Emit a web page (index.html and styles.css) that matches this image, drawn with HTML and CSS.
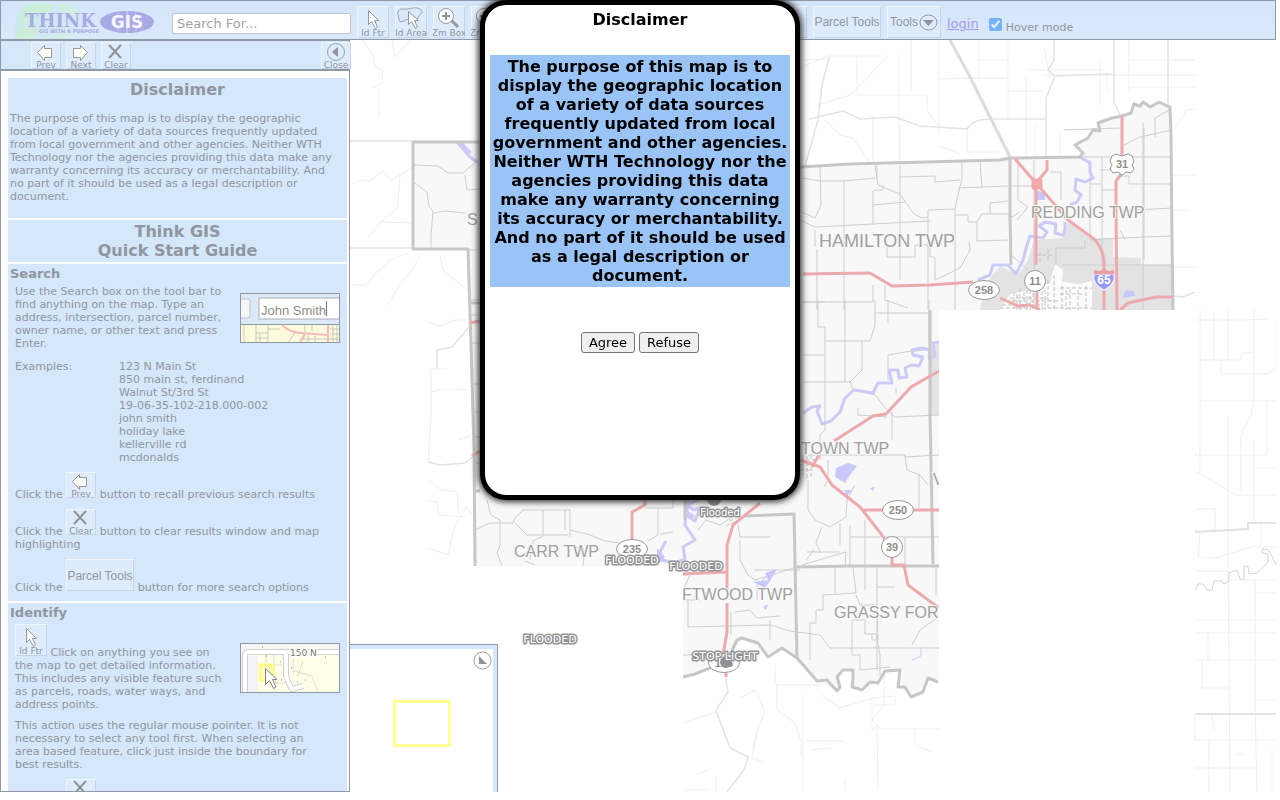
FILE: index.html
```html
<!DOCTYPE html>
<html lang="en">
<head>
<meta charset="utf-8">
<title>Think GIS</title>
<link rel="stylesheet" href="styles.css">
</head>
<body>
<svg class="defs" aria-hidden="true">
  <defs>
    <symbol id="i-prev" viewBox="0 0 30 26"><path d="M6.500 9.500 13.500 2.500V5.500H20.500V14.500H13.500V17.500Z" fill="#fdfdf6" stroke="#96979b"/><text x="15" y="25" class="px">Prev</text></symbol>
    <symbol id="i-next" viewBox="0 0 30 26"><path d="M21.500 9.500 14.500 2.500V5.500H7.500V14.500H14.500V17.500Z" fill="#fdfdf6" stroke="#96979b"/><text x="15" y="25" class="px">Next</text></symbol>
    <symbol id="i-clear" viewBox="0 0 30 26"><path d="M8 2 20 15M20 2 8 15" fill="none" stroke="#8e9299" stroke-width="2"/><text x="15" y="25" class="px">Clear</text></symbol>
    <symbol id="i-close" viewBox="0 0 30 26"><circle cx="15" cy="9" r="8.500" fill="none" stroke="#96a0ae"/><path d="M17 4V14L11 9Z" fill="#8e9299"/><text x="15" y="25" class="px">Close</text></symbol>
    <symbol id="i-ftr" viewBox="0 0 32 32"><path d="M11.500 4.500V18.500L14.500 15.500 18.500 22.500 20.500 21 17.500 14.500H21.500Z" fill="#fdfdfd" stroke="#96979b"/><text x="16" y="30" class="px">Id Ftr</text></symbol>
    <symbol id="i-area" viewBox="0 0 32 32"><path d="M3 6C4 1 9 4 13 3S21 1 25 3 26 8 24 10 22 15 19 15 15 12 11 14 4 17 4 13 2 9 3 6Z" fill="#dce9fa" stroke="#96a0ae"/><path d="M13.500 5.500V18.500L16.500 15.500 20.500 22.500 22.500 21 19.500 14.500H23.500Z" fill="#fdfdfd" stroke="#96979b"/><text x="16" y="30" class="px">Id Area</text></symbol>
    <symbol id="i-zoom" viewBox="0 0 32 32"><path d="M18 14 25 21" stroke="#96979b" stroke-width="3"/><circle cx="13" cy="10" r="7.500" fill="#fff" stroke="#96979b"/><path d="M9 10H17M13 6V14" stroke="#8e9299" stroke-width="2"/><text x="16" y="30" class="px">Zm Box</text></symbol>
    <symbol id="i-parcel" viewBox="0 0 68 32"><text x="34" y="21" class="tool-text">Parcel Tools</text></symbol>
  </defs>
</svg>

<div class="app">
  <header class="topbar">
    <svg class="logo" viewBox="0 0 160 38" width="160" height="38" role="img" aria-label="Think GIS, GIS with a purpose">
      <defs>
        <linearGradient id="sea"><stop offset="0" stop-color="#c8ebe6"/><stop offset="1" stop-color="#d5e7fa" stop-opacity="0"/></linearGradient>
      </defs>
      <path d="M14 38Q12 12 28 2H110V38Z" fill="url(#sea)"/>
      <path d="M21 8Q38-2 53 4Q50 13 38 13Q32 21 23 23Q17 18 21 8ZM18 29Q30 24 38 29L30 38H16Z" fill="#cbedd9"/>
      <path d="M55 3Q75 0 79 12Q73 18 61 13ZM56 32Q68 28 73 34L64 38H54Z" fill="#d2eee4"/>
      <text x="24" y="26" class="logo-word">THINK</text>
      <ellipse cx="126" cy="21" rx="27" ry="11" fill="#a9aae4"/>
      <path d="M126 10V32M118 12Q110 21 118 30M134 12Q142 21 134 30" stroke="#d3d8f6" fill="none"/>
      <text x="126" y="27" class="logo-gis">GIS</text>
      <text x="38" y="32" class="logo-sub">GIS WITH A PURPOSE</text>
    </svg>
    <input class="search" type="text" placeholder="Search For..." aria-label="Search">
    <div class="tools">
      <button class="tool" aria-label="Id Ftr"><svg><use href="#i-ftr"/></svg></button>
      <button class="tool" aria-label="Id Area"><svg><use href="#i-area"/></svg></button>
      <button class="tool" aria-label="Zm Box"><svg><use href="#i-zoom"/></svg></button>
      <button class="tool" aria-label="Zm Box"><svg><use href="#i-zoom"/></svg></button>
      <button class="tool last"></button>
    </div>
    <button class="tool wide">Parcel Tools</button>
    <button class="tool menu">Tools
      <svg width="19" height="17" viewBox="0 0 19 17"><ellipse cx="9.500" cy="8.500" rx="8.500" ry="7.500" fill="none" stroke="#8e97a5"/><path d="M4 6H15L9.500 12Z" fill="#8e9299"/></svg></button>
    <a class="login" href="#login">login</a>
    <label class="hover"><input type="checkbox" checked><span>Hover mode</span></label>
  </header>

  <div class="body">
    <aside class="side">
      <nav class="sidebar-tools">
        <button class="small" aria-label="Prev"><svg><use href="#i-prev"/></svg></button>
        <button class="small" aria-label="Next"><svg><use href="#i-next"/></svg></button>
        <button class="small" aria-label="Clear"><svg><use href="#i-clear"/></svg></button>
        <button class="small close" aria-label="Close"><svg><use href="#i-close"/></svg></button>
      </nav>
      <div class="results">
        <section class="block">
          <h2>Disclaimer</h2>
          <p class="legal">The purpose of this map is to display the geographic location of a variety of data sources frequently updated from local government and other agencies. Neither WTH Technology nor the agencies providing this data make any warranty concerning its accuracy or merchantability. And no part of it should be used as a legal description or document.</p>
        </section>
        <section class="block"><h2>Think GIS<br>Quick Start Guide</h2></section>
        <section class="block">
          <h3>Search</h3>
          <div class="guide">
            <svg class="shot" viewBox="0 0 100 50">
              <rect width="100" height="50" fill="#dce9f9"/>
              <rect x="-5" y="6" width="15" height="19" rx="2" fill="#f5f6f8" stroke="#bcc3ce"/>
              <rect x="19" y="5" width="90" height="21" fill="#fff" stroke="#a9acb3"/>
              <text x="21" y="22" class="shot-text">John Smith</text><path d="M86.500 8V23" stroke="#777"/>
              <rect y="31" width="100" height="19" fill="#fdfadd"/><path d="M0 31.500H100" stroke="#8d99a6"/>
              <path d="M4 32V50M16 32V50M28 32V50M16 40H28M16 45H28M20 41V50M28 36H40M48 50 56 38M65 32V39M72 32V38M60 46H100M68 42V50M75 43V50M93 32V50M97 32V50M90 36H100M90 41H100" stroke="#c9c9ba" fill="none"/>
              <path d="M42 32Q49 39 60 40L88 42M88 32V50M60 50 65 41" stroke="#f6b9bd" stroke-width="2" fill="none"/>
              <rect x=".5" y=".5" width="99" height="49" fill="none" stroke="#8d99a6"/>
            </svg>
            <p>Use the Search box on the tool bar to find anything on the map. Type an address, intersection, parcel number, owner name, or other text and press Enter.</p>
            <dl><dt>Examples:</dt><dd>123 N Main St<br>850 main st, ferdinand<br>Walnut St/3rd St<br>19-06-35-102-218.000-002<br>john smith<br>holiday lake<br>kellerville rd<br>mcdonalds</dd></dl>
            <p>Click the <svg class="pic"><use href="#i-prev"/></svg> button to recall previous search results</p>
            <p>Click the <svg class="pic"><use href="#i-clear"/></svg> button to clear results window and map highlighting</p>
            <p>Click the <svg class="pic parcel"><use href="#i-parcel"/></svg> button for more search options</p>
          </div>
        </section>
        <section class="block">
          <h3>Identify</h3>
          <div class="guide">
            <svg class="shot second" viewBox="0 0 100 50">
              <rect width="100" height="50" fill="#fffee8"/><path d="M0 0H100V10H8V50H0Z" fill="#f5f5f3"/><path d="M8 13H18V50H8Z" fill="#f3f3f5"/>
              <path d="M5 50V12Q5 9 10 9H100M46 10V32Q49 42 52 46L63 43" fill="none" stroke="#cfcfcf" stroke-width="6"/>
              <path d="M5 50V12Q5 9 10 9H100M46 10V32Q49 42 52 46L63 43" fill="none" stroke="#fff" stroke-width="4"/>
              <path d="M26 12V20M34 12V30M53 13V32M42 22H20M54 28 72 33 78 50M63 18 58 33M30 40H46M35 32V49" fill="none" stroke="#deded5"/>
              <rect x="20" y="22" width="13" height="15" fill="#fffec0" stroke="#fffb8c" stroke-width="3"/>
              <path d="M22 4h1M26 13h1M40 19h1M50 14h1M51 25h1M41 37h1M57 39h1M65 37h1M85 14h1" stroke="#888"/>
              <text x="50" y="13" class="road">150 N</text>
              <path d="M25.500 25.500V41.500L29.500 37.500 33.500 45.500 36 44 32.500 36.500H37Z" fill="#fff" stroke="#888"/>
              <rect x=".5" y=".5" width="99" height="49" fill="none" stroke="#8d99a6"/>
            </svg>
            <p><svg class="pic ftr"><use href="#i-ftr"/></svg> Click on anything you see on the map to get detailed information. This includes any visible feature such as parcels, roads, water ways, and address points.</p>
            <p class="narrow">This action uses the regular mouse pointer. It is not necessary to select any tool first. When selecting an area based feature, click just inside the boundary for best results.</p>
            <p>Click the <svg class="pic"><use href="#i-clear"/></svg></p>
          </div>
        </section>
      </div>
    </aside>

    <main class="map">
      <svg class="canvas" role="img" aria-label="County map">
        <defs>
          <clipPath id="tiles"><path d="M350 40H1195V310H939V792H683V566H350Z"/></clipPath>
        </defs>
        <g transform="translate(-350 -40)">
          <g clip-path="url(#tiles)">
            <g class="faint">
              <path d="M363 40 373 56 375 66 383 71 382 83 373 88M379 90V117M392 40 395 57 403 48 410 40M352 184 362 180 370 181 383 171 391 180 400 175 413 167M400 175 398 207 378 225 368 238M380 222 412 223M350 285 366 285 376 273 390 260 408 253M420 255 413 269 398 287 388 305M440 255 443 270 455 280 467 290M427 322 440 326 455 320 472 320M428 369H448M431 371V420L428 460M430 392 445 389 468 390M458 440 470 436M428 480 440 489 457 492 459 515M428 500 438 503V515L465 517M428 548 448 555 454 528 466 507 472 515"/>
              <path d="M790 72 828 56H880M804 60 826 59M818 105 850 95 869 76 888 55M857 57V95H927V110L939 127M899 55V160M911 40V92M939 40V135M962 78H1008M979 40V80M1008 40V120M1026 70H1100M825 120 840 135 853 138 870 163M873 116V165M900 125V160M967 128V152H1000M939 146 960 154M1026 77V160M1008 91H1044M1045 75H1195M1128 60H1195M1128 87H1195M1129 40V90M1044 48 1050 78M1107 75V90M1172 60H1195M1174 130 1187 110 1195 109M1173 175H1195M1173 210H1190M1173 267H1195M1035 126V154M1060 130V157M1100 62V105M977 60H1010M937 79 1005 78"/>
              <path d="M775 665V685L820 685M777 684V710L795 723 801 741V757M683 723 717 712M740 698 755 690 765 712 758 728 752 758 763 762M822 695 839 708 873 698 895 696V705H873M872 700V730L877 725 878 790M884 672V705L872 720 880 728M845 780V792M803 695V792M805 741H845M811 750 832 748M685 790H710M880 729H939M915 730V745L932 752M697 775 708 770M716 777V792M752 750 758 728"/>
            </g>
            <g class="soft">
              <path d="M350 141H413M350 248H413M804 170 818 120 822 85 829 57M809 119 843 111 860 119 895 117 920 126 967 129Q973 119 990 119H1045M1054 40V60L1048 70 1055 76 1046 98V158M1055 76 1112 74M1114 40V102L1120 115M1168 40V107M428 462 440 465 465 463 475 455M437 369V350L452 347 470 326M725 672 728 692 716 710 730 748 748 757 744 770 727 792"/>
              <path class="thick" d="M950 40 970 77 990 117 1010 157"/>
              <path d="M1173 296 1183 297 1195 292"/>
            </g>
            <path class="land" d="M413 142H480L800 166 1010 159 1080 157 1083 153 1075 145 1088 138 1093 130 1100 131 1098 123 1112 118 1122 116 1131 113 1134 104 1143 102 1150 107 1159 102 1170 107 1173 310H939V682L928 678 923 692 911 697 898 687 900 670 885 671 878 683 862 690 852 687 853 670 843 670 837 691 817 681 797 658 782 648 768 657 742 638 730 655 683 677V566H476L468 249H413Z"/>
            <path class="city" d="M980 310 985 285 1000 266 1018 275 1028 260 1034 240 1062 238 1068 222 1080 231 1090 238H1113V257L1141 258V265L1172 265V310ZM929 350 939 342V415H929Z"/>
            <path class="open" d="M1000 310 1010 294 1030 290 1050 283 1055 264 1063 270 1062 282 1080 284 1092 281 1092 310Z"/>
            <g class="local">
              <path d="M413 165 438 166 448 173 463 173 477 161 485 174M465 175 467 190 480 189M415 183 427 192 429 206 433 212 431 235V249M433 213 445 211 465 213M468 250H480M471 300H480M471 315H480M471 343H480M471 384H480M474 412H480M474 437H480M474 463H480M475 530 490 523 513 523 515 518 523 510H570V537M565 510V530M543 510V536L533 541 530 560M515 523 527 535H568M487 500 491 515 500 520 500 545 497 553 502 566M570 530 590 535 605 541 620 543M570 545 585 550 583 566M525 561 535 565M645 508H673V500M658 508V535L648 541M660 534 673 532"/>
              <path d="M802 178 820 181 843 181 877 178V163M820 167 821 205 815 218 802 212M800 220 815 227 930 221M844 181V310M817 249V310M815 230V247M875 165 878 185 900 194 914 214 922 218 928 217V210L955 209M900 165V280M900 177 935 176V182L960 180M962 160V178L955 208V310M980 161 982 188M958 188 1008 186M872 192 875 190H883V185M873 191V225M873 205 905 202M955 215H968V222H977L982 214H1008M990 203V214M990 203 1008 201M977 222V241L1008 240M887 247V257H915V245M915 245H930V257H935L935 280 960 268 970 250 969 242M802 302H873V285M885 285V300L908 308M928 217V310"/>
              <path d="M1010 186H1034M1034 160V305M1050 172H1061V200M1018 158V200L1028 207 1017 220M1010 218 1020 212M1028 270 1010 254M1122 146 1140 137 1172 130M1143 123V310M1064 130 1120 128M1083 157H1172M1102 157V265M1100 170H1120M1120 176H1129V184H1172M1090 184H1102M1102 190H1118M1090 160V240M1120 211 1172 208M1120 238 1172 236M1120 230 1125 240M1144 128V260M1155 137V118L1169 110M1090 240 1120 238M1056 248H1085V240M1056 248V265M1063 265H1172"/>
              <path d="M803 302H825M818 300V327H825V341H870L875 325V300M845 300V382M825 341V430L820 435V460M802 355H825M862 341V370L850 382 802 382M875 313H929M888 300V323M888 355 905 352 925 350M888 355V380M929 340V300M850 382 853 390M853 390 875 395 887 410 895 417 939 415M858 408V415L887 417M892 412V440M896 388V393M808 455H905V457L939 455M905 455 907 470 920 475 928 485M919 475V508M828 460V480L824 487M808 480V510L815 520 830 527 846 517 847 500 855 485M865 520V590M807 552H840M822 527 816 543 821 553M850 525V565M850 537H939M802 565 846 552 845 565M905 537V565M740 537 738 525M740 537H770M740 540V560L748 575 755 580 797 567M683 590 690 575M754 570 800 570M735 612 750 610 757 618 780 616M684 600H700M688 600V627L770 625M770 620V640M683 655H720M770 625 790 631 820 635 830 648H939M810 660V623H816V610H823V595L856 593 853 567M835 567V593M856 595 860 605H877L878 640H872V633M852 620V655H860V670L890 667M852 620H865V634H876L880 655V675M877 567V670M877 587H895M912 645 920 630 938 617M731 635V612M698 530 706 520 720 525 735 515M840 523V545M814 550 806 560M936 565V595"/>
              <path class="streets" d="M800 460H815M803 455V475M807 456V480M811 455V478M800 465H814M800 470H813M1002 305H1040M1010 298H1048M1006 301H1060M1000 308H1092M1014 292V310M1017 294V310M1020 288V310M1024 292V310M1027 290V310M1030 290V310M1033 287V310M1042 285V310M1045 290V310M1048 280V310M1054 275V310M1060 288H1092M1060 294H1084M1062 286V310M1066 290V310M1070 289V310M1078 290V310M1086 286V310M1036 255H1054M1040 252V262M1048 250V260M730 521 736 518 740 512M726 526 734 522"/>
            </g>
            <g class="water">
              <path d="M457 142 470 157 477 162M460 142 470 152 465 147M1080 157 1090 163 1090 172 1093 178 1085 182 1076 179 1075 190 1081 195 1077 202 1070 205M1065 222V230L1063 235 1055 233 1056 224 1045 222 1039 226 1047 232 1043 238 1030 236 1027 245 1023 260 1016 274 1008 265H993L990 275 978 280"/>
              <path d="M939 342 933 343 935 356 929 358 930 350 922 348 912 350 913 355 923 357 919 366 911 365 905 368 907 377 899 378 898 370 889 370 892 383 878 383 873 393 854 390 845 398 840 412 831 421 822 424 817 411 820 406 812 407 803 413"/>
              <path d="M698 500 687 505 694 510 700 508 695 521 686 515 685 525 695 540 683 547 685 559 675 563 661 560 660 552 666 541M688 500 687 512 694 517"/>
              <path class="stream" d="M912 660 921 656V647M757 600 757 585 771 573"/>
              <path class="pond" d="M836 468 848 463 857 466 850 475 845 483 835 477ZM844 490 852 490 847 496ZM870 488 875 487 873 491ZM753 582 768 580 765 573 777 569 770 581 765 588ZM763 607 768 604 766 610ZM1035 190 1045 193V200H1035ZM1122 298 1126 290 1134 291 1135 296ZM657 548 665 557 657 566Z"/>
            </g>
            <g class="border">
              <path d="M480 142H413V249H468L471 345 474 450 475 566M471 303H480M475 491H480M800 167 850 164 1000 160 1010 158 1080 157 1083 153 1075 145 1088 138 1093 130 1100 131 1098 123 1112 118 1122 116 1131 113 1134 104 1140 106 1143 102 1150 107 1159 102 1167 106 1170 107 1171 135 1172 240 1173 310M1010 158 1010 215 1011 265M930 310V415L933 564M797 567 850 566H939M745 516 794 514 797 658M685 500V520"/>
              <path d="M683 677 695 674 707 669 721 665 730 655 737 640 742 638 758 643 768 657 782 648 797 658 805 667 817 681 827 680 837 691 840 687 837 677 843 670 853 670 853 680 852 687 862 690 870 682 878 683 885 671 900 670 898 687 905 687 911 697 923 692 928 678 938 682"/>
            </g>
            <g class="main">
              <path d="M470 323 480 321M472 456 480 451M803 274 870 273 892 286 930 285 973 282M1015 159 1036 183 1068 220 1094 239Q1103 248 1104 262V310M1047 160V170L1036 183V265M1037 290V310M1000 298 1018 306 1030 305 1040 310M1122 116V155M1122 173 1116 181V213L1117 310M1120 310 1128 303 1156 297H1173M834 441 873 416 886 414 911 387 939 371M800 460 820 467 832 485 860 507 882 535 890 548M812 467 819 455M863 510H939M892 555V565H904L908 585 939 608M632 540V512L645 505V500M760 503 733 525 727 545V590M683 574 727 572M727 603V632L723 655M726 673V677"/>
              <path class="junction" d="M1033 180H1041V188H1033Z"/>
            </g>
            <g class="shields">
              <ellipse cx="984" cy="290" rx="15.500" ry="9.500"/><text x="984" y="294">258</text>
              <circle cx="1035" cy="281" r="10.500"/><text x="1035" y="285">11</text>
              <ellipse cx="898" cy="510" rx="15.500" ry="9.500"/><text x="898" y="514">250</text>
              <circle cx="892" cy="547" r="10.500"/><text x="892" y="551">39</text>
              <ellipse cx="632" cy="549" rx="15.500" ry="9.500"/><text x="632" y="553">235</text>
              <ellipse cx="724" cy="663" rx="15.500" ry="9.500"/><text x="724" y="667">135</text>
              <path d="M1112 156 1116 154 1122 156 1128 154 1132 156 1134 161 1132 165 1134 169 1131 173 1126 172 1122 175 1118 172 1113 173 1110 169 1112 165 1110 161Z"/><text x="1122" y="168">31</text>
              <path class="inter" d="M1094 274H1114Q1116 284 1104 290Q1092 284 1094 274Z"/><path class="red" d="M1094 270 1100 271 1104 269 1108 271 1114 270V274H1094Z"/><text class="white" x="1104" y="284">65</text>
            </g>
            <g class="towns">
              <text class="large" x="819" y="247">HAMILTON TWP</text><text x="1031" y="218">REDDING TWP</text><text x="801" y="454">TOWN TWP</text><text x="514" y="557">CARR TWP</text><text x="682" y="600">FTWOOD TWP</text><text x="834" y="618">GRASSY FORK</text><text x="467" y="225">S</text><text x="933" y="485">V</text>
            </g>
          </g>
          <g class="faint east">
            <path d="M1195 320H1240L1268 319M1200 310V472M1214 313V360M1228 310V360M1200 360H1241V353H1254M1254 310V400L1251 415 1241 435V495M1221 360V374H1268L1276 367V320M1200 401H1276M1228 416V555L1230 792M1254 440V523M1195 455H1267V400M1255 468H1276M1197 472 1236 495H1276M1195 509H1215V530M1195 571H1228M1200 533 1198 557 1215 558 1255 546M1255 547H1276M1255 580V700L1257 792M1230 580H1276M1257 593H1276M1195 620H1276M1195 633H1276M1208 634V660M1195 660H1276M1202 661V688H1228M1257 700H1276M1195 740H1276M1209 740V792M1195 768H1257M1272 750V792M1261 525V546M1195 715V740M1214 730 1212 715M1235 754H1244"/>
            <path class="road2" d="M1195 532 1248 529V523H1276M1195 714H1276"/>
            <path class="creek" d="M1195 590 1198 584 1203 584 1207 590 1212 590 1214 581 1222 581 1224 584 1229 581V573L1237 570 1240 579 1244 579 1244 566 1248 567 1249 574 1257 573 1268 562 1268 554 1262 553 1263 549 1269 550 1276 565"/>
          </g>
          <g class="markers">
            <circle cx="714" cy="499" r="7"/><circle cx="726" cy="662" r="6"/>
            <text x="720" y="516" class="mixed">Flooded</text><text x="632" y="564">FLOODED</text><text x="696" y="570">FLOODED</text><text x="550" y="643">FLOODED</text><text x="725" y="660">STOP LIGHT</text>
          </g>
        </g>
      </svg>
      <div class="overview">
        <button class="collapse" aria-label="Collapse overview"><svg width="19" height="19" viewBox="0 0 19 19"><circle cx="9.500" cy="9.500" r="8.500" fill="#fff" stroke="#999"/><path d="M6 5V13H14Z" fill="#8e9299"/></svg></button>
        <div class="extent"></div>
      </div>
    </main>
  </div>
</div>

<div class="dialog" role="dialog" aria-labelledby="dlg-title">
  <h1 id="dlg-title">Disclaimer</h1>
  <p>The purpose of this map is to display the geographic location of a variety of data sources frequently updated from local government and other agencies. Neither WTH Technology nor the agencies providing this data make any warranty concerning its accuracy or merchantability. And no part of it should be used as a legal description or document.</p>
  <div class="actions"><button>Agree</button><button>Refuse</button></div>
</div>
</body>
</html>
```

FILE: styles.css
```css
* { box-sizing: border-box; }
body { margin: 0; background: #fff; color: #90969f; font: 11px/13px "DejaVu Sans", sans-serif; }
h1, h2, h3, p, dl, dd { margin: 0; }
button { font-family: inherit; }
.defs { position: absolute; width: 0; height: 0; }
.app { display: flex; flex-direction: column; height: 100vh; padding: 0 4px 8px 0; }

.topbar { display: flex; flex: none; height: 40px; border: 1px solid #8f99a7; background: linear-gradient(#d3e5fa, #dbe8fb); }
.logo { flex: none; margin-right: 11px; }
.search { flex: none; align-self: center; width: 179px; height: 21px; margin: 6px 6px 0 0; padding: 0 4px; border: 1px solid #c0c6cf; border-radius: 2px; background: #fff; font: 13px "DejaVu Sans", sans-serif; color: #777; }
.search::placeholder { color: #a3a3a3; opacity: 1; }
.tools { display: grid; flex: none; grid-template-columns: repeat(12, 32px); gap: 6px; margin-right: 6px; }
.tools .last { grid-column: 12; }
.tool, .small { padding: 0; border: 0; background: #deebfd; color: #90969f; }
.tool, .small, .pic { box-shadow: inset 1px 1px #eef5ff, inset -1px -1px #c6d4e8; }
.tool { height: 32px; margin-top: 5px; }
.tool > svg { display: block; width: 32px; height: 32px; }
.small > svg { display: block; width: 30px; height: 26px; }
.wide { flex: none; width: 68px; margin-right: 6px; }
.menu { display: flex; flex: none; align-items: center; justify-content: space-between; width: 54px; padding: 0 3px; margin-right: 6px; }
.menu > svg { width: 19px; height: 17px; }
.wide, .menu { font: 12px "Liberation Sans", sans-serif; }
.login { margin: 14px 10px 0 0; font-size: 13px; line-height: 18px; color: #a09bf0; }
.hover { display: flex; align-items: flex-start; gap: 4px; padding-top: 17px; }
.hover input { width: 13px; height: 13px; margin: 0; opacity: .45; }
.hover span { padding-top: 3px; }
.px { font: 9px "DejaVu Sans", sans-serif; fill: #8e949d; text-anchor: middle; }
.tool-text { font: 12px "Liberation Sans", sans-serif; fill: #90969f; text-anchor: middle; }
.logo-word { font: bold 18px "DejaVu Serif", serif; fill: #a9aae4; }
.logo-gis { font: bold 17px "DejaVu Sans", sans-serif; fill: #f4f6ff; text-anchor: middle; }
.logo-sub { font: bold 5px "DejaVu Sans", sans-serif; fill: #a9aae4; }

.body { display: flex; flex: 1; min-height: 0; }
.side { display: flex; flex: none; flex-direction: column; width: 350px; border: 1px solid #8f99a7; }
.sidebar-tools { display: flex; flex: none; gap: 5px; height: 30px; padding: 1px 0 0 30px; border-bottom: 2px solid #8f99a7; background: #d5e7fa; }
.small { flex: none; width: 30px; height: 27px; }
.close { margin-left: auto; margin-right: -2px; }
.results { flex: 1; min-height: 0; overflow: hidden; padding: 7px 2px 0 7px; }
.block { margin-bottom: 2px; padding: 2px; background: #d5e7fa; }
.block h2 { font-size: 16px; line-height: 19px; text-align: center; }
.block h3 { font-size: 13px; line-height: 15px; }
.legal { padding: 13px 8px 13px 0; }
.guide { padding: 4px 5px 5px; }
.guide p { margin-bottom: 8px; }
.guide > p:last-child { margin-bottom: 0; }
.guide .narrow { padding-right: 12px; }
.shot { float: right; width: 100px; height: 50px; margin: 8px 0 0 14px; }
.second { margin-top: 19px; }
dl { display: grid; grid-template-columns: 104px 1fr; padding-top: 2px; margin-bottom: 8px; }
.pic { width: 30px; height: 26px; background: #deebfd; vertical-align: baseline; }
.parcel { width: 68px; height: 32px; }
.ftr { width: 32px; height: 32px; }
.shot-text { font: 13px "Liberation Sans", sans-serif; fill: #8b8b8b; }
.road { font: 9px "DejaVu Sans", sans-serif; fill: #777; stroke: #fff; stroke-width: 3px; paint-order: stroke; }

.map { position: relative; flex: 1; min-width: 0; overflow: hidden; }
.canvas { display: block; width: 100%; height: 100%; }
.canvas path { fill: none; }
.faint { stroke: #efefef; }
.faint .road2 { stroke: #e2e2e2; stroke-width: 2; }
.faint .creek { stroke: #d3d3d3; }
.soft { stroke: #e3e3e3; stroke-width: 1.5; }
.soft .thick { stroke: #dcdcdc; stroke-width: 3; }
.canvas .land { fill: #f8f8f8; }
.canvas .city { fill: #e3e3e3; }
.canvas .open { fill: #fcfcfc; }
.local { stroke: #cdcdcd; }
.local .streets { stroke: #c3c3c3; stroke-dasharray: 4 2; }
.water { stroke: #cccbf8; stroke-width: 3; stroke-linejoin: round; }
.water .stream { stroke-width: 1; }
.canvas .pond { fill: #c9c8fb; stroke: none; }
.border { stroke: #c7c7c7; stroke-width: 3; stroke-linejoin: round; }
.main { stroke: #edaaad; stroke-width: 3; stroke-linejoin: round; }
.canvas .junction { fill: #f9a9a9; }
.shields ellipse, .shields circle, .shields path { fill: #fff; stroke: #999; }
.canvas .inter { fill: #9698ff; stroke: #fff; }
.canvas .red { fill: #ef9ca0; stroke: none; }
.shields text { font: bold 11px "Liberation Sans", sans-serif; fill: #8d8d8d; text-anchor: middle; }
.shields .white { font-size: 12px; fill: #fff; }
.towns text { font: 16px "Liberation Sans", sans-serif; fill: #a0a0a0; stroke: #f9f9f9; stroke-width: 2px; paint-order: stroke; }
.towns .large { font-size: 18px; }
.markers circle { fill: #919191; }
.markers text { font: 11px "DejaVu Sans", sans-serif; fill: #fff; stroke: #929292; stroke-width: 3px; stroke-linejoin: round; paint-order: stroke; text-anchor: middle; }
.markers .mixed { font-size: 10px; }
.overview { position: absolute; left: 0; bottom: 0; width: 148px; height: 148px; border: 1px solid #8f99a7; border-width: 1px 1px 0 0; box-shadow: inset -4px 4px #d5e7fa; background: #fff; }
.collapse { position: absolute; top: 6px; right: 5px; padding: 0; border: 0; background: none; }
.collapse svg { display: block; }
.extent { position: absolute; left: 43px; top: 55px; width: 58px; height: 47px; border: 3px solid #ffff96; }

.dialog { position: fixed; top: 0; left: 50%; width: 320px; height: 500px; margin-left: -160px; padding: 5px; border: 5px solid #000; border-radius: 26px; background: #fff; box-shadow: 0 0 6px 2px #333; color: #000; text-align: center; }
.dialog h1 { font-size: 16px; line-height: 19px; }
.dialog p { margin: 26px 0 45px; padding: 2px; background: #99c4f5; font-size: 16px; font-weight: bold; line-height: 19px; }
.actions { display: flex; justify-content: center; gap: 4px; }
.actions button { height: 21px; padding: 0 7px; border: 1px solid #767676; border-radius: 3px; background: #efefef; font-size: 13px; color: #000; }
```
